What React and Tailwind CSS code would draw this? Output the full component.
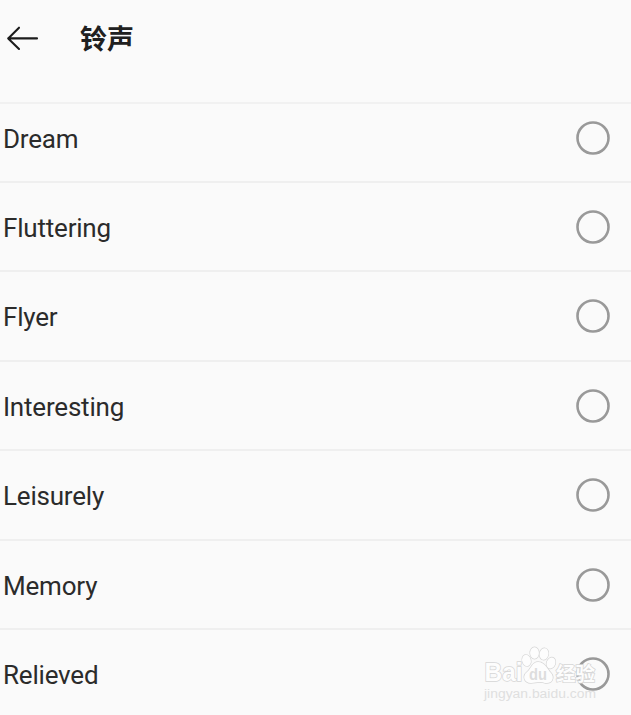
const tones = ["Dream", "Fluttering", "Flyer", "Interesting", "Leisurely", "Memory", "Relieved"];

function Header() {
  return (
    <header className="flex h-[104px] items-start border-b-2 border-[#f1f1f1] pt-[18px]">
      <svg className="ml-[6px] mt-[7px] h-[27px] w-[34px]" viewBox="0 0 34 27" fill="none" stroke="#1c1c1c" strokeWidth="2.1" strokeLinecap="round" strokeLinejoin="round">
        <path d="M13 2.7 2.2 13.4 13 24M2.2 13.4H31" />
      </svg>
      <h1 className="ml-[40px] mt-[2px] text-[27px] font-bold leading-[40px] text-[#202020]">铃声</h1>
    </header>
  );
}

function ToneRow({ name, first }) {
  return (
    <li
      className={`flex shrink-0 items-end justify-between border-b-2 border-[#efefef] pb-[26.4px] pl-[3px] pr-[21px] ${first ? "h-[79px]" : "h-[89.4px]"}`}
    >
      <span className="h-[34px] pt-[1px] text-[26px] leading-[34px] tracking-[-0.2px] text-[#2b2b2b]">{name}</span>
      <svg className="size-[34px]" viewBox="0 0 34 34" fill="none" stroke="#999999" strokeWidth="2.6">
        <circle cx="17" cy="17" r="15.5" />
      </svg>
    </li>
  );
}

function Watermark() {
  return (
    <svg
      className="absolute left-[480px] top-[643px] h-[62px] w-[124px] font-['Liberation_Sans','Noto_Sans_CJK_SC',sans-serif]"
      viewBox="0 0 124 62"
      fill="#fdfdfd"
      stroke="#d6d6d6"
      strokeWidth="1.5"
      paintOrder="stroke"
    >
      <text x="4.5" y="38" fontSize="25" fontWeight="bold" textLength="38" lengthAdjust="spacingAndGlyphs">Bai</text>
      <g strokeWidth="1.3">
        <ellipse cx="46.5" cy="17.5" rx="4.3" ry="5.7" transform="rotate(-15 46.5 17.5)" />
        <ellipse cx="54.5" cy="10" rx="4.4" ry="5.8" />
        <ellipse cx="64" cy="11" rx="4.4" ry="5.8" transform="rotate(12 64 11)" />
        <ellipse cx="71" cy="20" rx="4.3" ry="5.7" transform="rotate(20 71 20)" />
        <path d="M58 19C52 19 51 26 47 29C42 33 44 40 51 40C55 40 60 38 65 40C72 41 75 35 71 30C67 26 65 19 58 19Z" />
      </g>
      <text x="49" y="37" fontSize="17" fontWeight="bold" textLength="18" lengthAdjust="spacingAndGlyphs" fill="#dddddd" stroke="none">du</text>
      <text x="76" y="38" fontSize="19.5" fontWeight="bold" fontFamily="Noto Sans CJK SC">经验</text>
      <text x="4" y="54.5" fontSize="12.5" textLength="112" lengthAdjust="spacingAndGlyphs" fill="#dfdfdf" stroke="none">jingyan.baidu.com</text>
    </svg>
  );
}

export default function App() {
  return (
    <main className="relative h-[715px] w-[631px] overflow-hidden bg-[#fafafa] font-['Roboto','Noto_Sans_CJK_SC',sans-serif]">
      <Header />
      <ul className="flex flex-col">
        {tones.map((name, i) => (
          <ToneRow key={name} name={name} first={i === 0} />
        ))}
      </ul>
      <Watermark />
    </main>
  );
}
